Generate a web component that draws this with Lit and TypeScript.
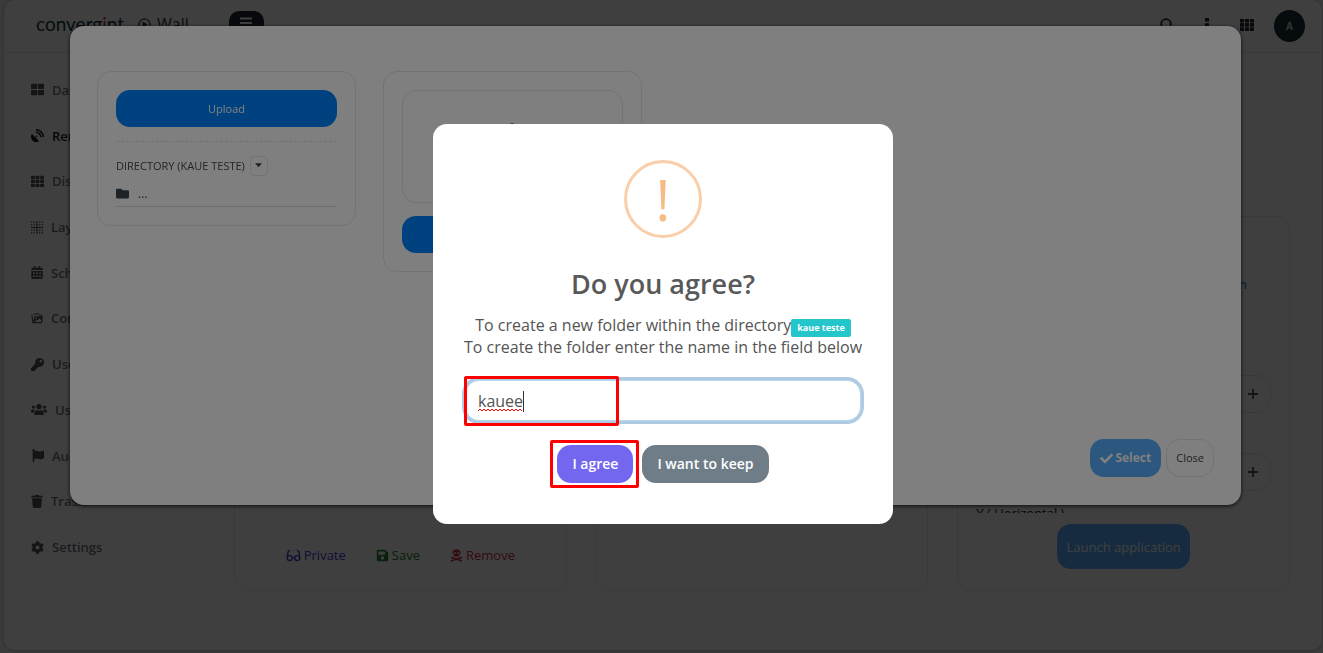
import { LitElement, html, svg, css } from "lit";
import { customElement, property, state } from "lit/decorators.js";

type Glyph = { box: string; body: unknown };

const p = (d: string) => svg`<path d=${d}></path>`;

const glyphs: Record<string, Glyph> = {
  blocks: {
    box: "0 0 512 512",
    body: svg`<rect y="32" width="242" height="208" rx="24"></rect><rect x="270" y="32" width="242" height="208" rx="24"></rect><rect y="272" width="242" height="208" rx="24"></rect><rect x="270" y="272" width="242" height="208" rx="24"></rect>`,
  },
  grid: {
    box: "0 0 512 512",
    body: svg`${[0, 181, 362].map((x) => [32, 187, 342].map((y) => svg`<rect x=${x} y=${y} width="150" height="132" rx="20"></rect>`))}`,
  },
  dish: {
    box: "0 0 512 512",
    body: p("M305.4 462.6c7.4 7.3 6.2 20.1-3 25-77.7 41.8-176.7 29.9-242.3-35.7C-5.5 386.3-17.4 287.4 24.4 209.6c4.9-9.1 17.7-10.3 25-3L166.2 323.4l27.4-27.4c-.7-2.6-1.6-5-1.6-7.8a32 32 0 1 1 32 32c-2.8 0-5.2-.9-7.8-1.6l-27.4 27.4ZM512 303.1a16.1 16.1 0 0 1-16 17H463.9a16 16 0 0 1-15.9-15C440.5 175.5 336.5 70.5 207 63.5a15.8 15.8 0 0 1-15-15.9V16A16.1 16.1 0 0 1 209 0C372.3 8.6 503.5 139.8 512 303.1Zm-96-.3a16.2 16.2 0 0 1-16.1 17.3H367.6a16.1 16.1 0 0 1-15.9-14.7c-6.9-77-68.1-138.9-144.9-145.2a15.9 15.9 0 0 1-14.8-15.9V112.1a16.1 16.1 0 0 1 17.3-16.1C319.5 104.5 407.6 192.6 416 302.8Z"),
  },
  layout: {
    box: "0 0 12 12",
    body: svg`${[0, 2.7, 5.3, 8, 10.7].map((x) => [0, 2.7, 5.3, 8, 10.7].map((y) => svg`<rect x=${x} y=${y} width="1.3" height="1.3"></rect>`))}<path d="M0 5.500h12v.9H0zM5.500 0h.9v12h-.9z"></path>`,
  },
  calendar: {
    box: "0 0 448 512",
    body: svg`<path fill-rule="evenodd" d="M0 464c0 26.500 21.500 48 48 48h352c26.500 0 48-21.500 48-48V192H0zm70-208h68v62H70zm120 0h68v62h-68zm120 0h68v62h-68zM70 376h68v62H70zm120 0h68v62h-68zm120 0h68v62h-68zM400 64h-48V16c0-9-7-16-16-16h-32c-9 0-16 7-16 16v48H160V16c0-9-7-16-16-16h-32c-9 0-16 7-16 16v48H48C21.500 64 0 85.500 0 112v48h448v-48c0-26.500-21.500-48-48-48z"></path>`,
  },
  images: {
    box: "0 0 14 14",
    body: svg`<path fill-rule="evenodd" d="M5 1h4l1 1.500h3.500V10L12.500 12.500h-11L.5 3h1.200l.8 8L4 4.500h8.300V3.600H9.500L8.500 2H5.600L5 3H3V2h1.500zM5 6.500a1 1 0 1 0 2 0 1 1 0 1 0-2 0zM4.300 11h7.600V9L9.800 6.800 7.800 9 6.800 8.200z"></path>`,
  },
  key: {
    box: "0 0 512 512",
    body: p("M512 176c0 97.2-78.8 176-176 176-11.2 0-22.2-1.1-32.8-3.1l-24 27A24 24 0 0 1 261.2 384H224v40c0 13.3-10.7 24-24 24h-40v40c0 13.3-10.7 24-24 24H24c-13.3 0-24-10.7-24-24v-78.1c0-6.4 2.5-12.5 7-17l161.8-161.8C163.1 213.8 160 195.3 160 176 160 78.8 238.8 0 336 0c97.5 0 176 78.5 176 176zM336 128c0 26.5 21.5 48 48 48s48-21.5 48-48-21.5-48-48-48-48 21.5-48 48z"),
  },
  users: {
    box: "0 0 640 512",
    body: p("M96 224c35.3 0 64-28.7 64-64s-28.7-64-64-64-64 28.7-64 64 28.7 64 64 64zm448 0c35.3 0 64-28.7 64-64s-28.7-64-64-64-64 28.7-64 64 28.7 64 64 64zm32 32h-64c-17.6 0-33.5 7.1-45.1 18.6 40.3 22.1 68.9 62 75.1 109.4h66c17.7 0 32-14.3 32-32v-32c0-35.3-28.7-64-64-64zm-256 0c61.9 0 112-50.1 112-112S381.9 32 320 32 208 82.1 208 144s50.1 112 112 112zm76.8 32h-8.3c-20.8 10-43.9 16-68.5 16s-47.6-6-68.5-16h-8.3C179.6 288 128 339.6 128 403.2V432c0 26.5 21.5 48 48 48h288c26.5 0 48-21.5 48-48v-28.8c0-63.6-51.6-115.2-115.2-115.2zm-223.7-13.4C161.5 263.1 145.6 256 128 256H64c-35.3 0-64 28.7-64 64v32c0 17.7 14.3 32 32 32h65.9c6.3-47.4 34.9-87.3 75.2-109.4z"),
  },
  flag: {
    box: "0 0 512 512",
    body: p("M350 98c-45 0-82-34-144-34-23 0-44 4-63 11a48 48 0 1 0-77 11v402c0 13 11 24 24 24h16c13 0 24-11 24-24v-94c28-12 64-22 115-22 45 0 82 34 144 34 44 0 80-15 112-37 7-5 11-12 11-20V96c0-24-24-39-45-29-34 16-76 31-117 31z"),
  },
  trash: {
    box: "0 0 448 512",
    body: p("M432 32H312l-9-19A24 24 0 0 0 281 0H167a24 24 0 0 0-22 13l-9 19H16A16 16 0 0 0 0 48v32a16 16 0 0 0 16 16h416a16 16 0 0 0 16-16V48a16 16 0 0 0-16-16zM32 128l21 339a48 48 0 0 0 48 45h246a48 48 0 0 0 48-45l21-339z"),
  },
  cog: {
    box: "0 0 512 512",
    body: p("M487.4 315.7l-42.6-24.6c4.3-23.2 4.3-47 0-70.2l42.6-24.6c4.9-2.8 7.1-8.6 5.5-14-11.1-35.6-30-67.8-54.7-94.6-3.8-4.1-10-5.1-14.8-2.3L380.8 110c-17.9-15.4-38.5-27.3-60.8-35.1V25.8c0-5.6-3.9-10.5-9.4-11.7-36.7-8.2-74.3-7.8-109.2 0-5.5 1.2-9.4 6.1-9.4 11.7V75c-22.2 7.9-42.8 19.8-60.8 35.1L88.7 85.5c-4.9-2.8-11-1.9-14.8 2.3-24.7 26.7-43.6 58.9-54.7 94.6-1.7 5.4.6 11.2 5.5 14L67.3 221c-4.3 23.2-4.3 47 0 70.2l-42.6 24.6c-4.9 2.8-7.1 8.6-5.5 14 11.1 35.6 30 67.8 54.7 94.6 3.8 4.1 10 5.1 14.8 2.3l42.6-24.6c17.9 15.4 38.5 27.3 60.8 35.1v49.2c0 5.6 3.9 10.5 9.4 11.7 36.7 8.2 74.3 7.8 109.2 0 5.5-1.2 9.4-6.1 9.4-11.7v-49.2c22.2-7.9 42.8-19.8 60.8-35.1l42.6 24.6c4.9 2.8 11 1.9 14.8-2.3 24.7-26.7 43.6-58.9 54.7-94.6 1.5-5.5-.7-11.3-5.6-14.1zM256 336c-44.1 0-80-35.9-80-80s35.9-80 80-80 80 35.9 80 80-35.9 80-80 80z"),
  },
  play: {
    box: "0 0 14 14",
    body: svg`<circle cx="7" cy="7" r="6" fill="none" stroke="currentColor" stroke-width="1.300"></circle><path d="M5 3.800v6.400L10.500 7z"></path>`,
  },
  bars: {
    box: "0 0 14 14",
    body: p("M1 1.500h12v2H1zM1 6h12v2H1zM1 10.500h12v2H1z"),
  },
  search: {
    box: "0 0 14 14",
    body: svg`<path d="M9.500 9.500 13 13" fill="none" stroke="currentColor" stroke-width="2"></path><circle cx="6" cy="6" r="4.800" fill="none" stroke="currentColor" stroke-width="1.800"></circle>`,
  },
  dots: {
    box: "0 0 14 14",
    body: p("M5 0h4v3.600H5zM5 5.200h4v3.600H5zM5 10.400h4V14H5z"),
  },
  folder: {
    box: "0 0 512 512",
    body: p("M464 128H272l-64-64H48C21.5 64 0 85.5 0 112v288c0 26.5 21.5 48 48 48h416c26.5 0 48-21.5 48-48V176c0-26.5-21.5-48-48-48z"),
  },
  check: {
    box: "0 0 512 512",
    body: p("M173.9 439.4 7.5 273c-10-10-10-26.2 0-36.2l36.2-36.2c10-10 26.2-10 36.2 0L192 312.7 432.1 72.6c10-10 26.2-10 36.2 0l36.2 36.2c10 10 10 26.2 0 36.2L210.1 439.4c-10 10-26.2 10-36.2 0z"),
  },
  glasses: {
    box: "0 0 16 14",
    body: svg`<g fill="none" stroke="currentColor" stroke-width="1.500"><circle cx="4" cy="9.800" r="2.700"></circle><circle cx="12" cy="9.800" r="2.700"></circle><path d="M6.600 9.300h2.800M1.200 9.500 2.200 2.800Q2.500 1.500 4.500 1.500M14.800 9.500l-1-6.700Q13.500 1.500 11.500 1.500"></path></g>`,
  },
  save: {
    box: "0 0 448 512",
    body: p("M433.9 129.9l-83.8-83.8A48 48 0 0 0 316.1 32H48C21.5 32 0 53.5 0 80v352c0 26.5 21.5 48 48 48h352c26.5 0 48-21.5 48-48V163.9a48 48 0 0 0-14.1-34zM224 416c-35.3 0-64-28.7-64-64s28.7-64 64-64 64 28.7 64 64-28.7 64-64 64zm96-304.5V212c0 6.6-5.4 12-12 12H76c-6.6 0-12-5.4-12-12V108c0-6.6 5.4-12 12-12h228.5c3.2 0 6.2 1.3 8.5 3.5l3.5 3.5a12 12 0 0 1 3.5 8.5z"),
  },
  skull: {
    box: "0 0 14 14",
    body: svg`<path fill-rule="evenodd" d="M7 .3c2.500 0 4.300 1.600 4.300 3.600 0 1.300-.8 2.300-1.800 2.900v1.400h-5V6.800c-1-.6-1.800-1.600-1.800-2.900C2.700 1.900 4.500.3 7 .3zM4.300 4.200a1 1 0 1 0 2 0 1 1 0 1 0-2 0zm3.400 0a1 1 0 1 0 2 0 1 1 0 1 0-2 0z"></path><path d="M1 8.800l12 4.200M13 8.800 1 13" fill="none" stroke="currentColor" stroke-width="1.700"></path>`,
  },
  caret: { box: "0 0 8 5", body: p("M0 0h8L4 4.6z") },
  plus: { box: "0 0 10 10", body: p("M4.1 0h1.8v4.1H10v1.8H5.9V10H4.1V5.9H0V4.1h4.1z") },
  upload: { box: "0 0 16 12", body: p("M4 12a4 4 0 0 1-1-7.800A5 5 0 0 1 12.500 4 4 4 0 0 1 12 12z") },
};

@customElement("ui-icon")
class UiIcon extends LitElement {
  static styles = css`
    :host { display: inline-flex; flex: none; width: 13px; height: 13px; }
    svg { width: 100%; height: 100%; fill: currentColor; }
  `;
  @property() name = "";
  render() {
    const g = glyphs[this.name];
    return html`<svg viewBox=${g.box} aria-hidden="true">${g.body}</svg>`;
  }
}

@customElement("side-menu")
class SideMenu extends LitElement {
  static styles = css`
    :host { display: block; }
    .menu { display: grid; grid-auto-rows: 1fr; min-height: 503px; padding: 14px 0 0 27px; }
    .item { display: flex; align-items: center; gap: 8px; color: #6e7180; font-size: 13px; font-weight: 600; text-decoration: none; white-space: nowrap; }
    .item.active { color: #11141c; }
    .item ui-icon { color: #50525f; }
    .item.active ui-icon { color: #11141c; }
    .item.narrow ui-icon { width: 12px; }
    .item.wide ui-icon { width: 16px; }
  `;
  private items: [string, string, string][] = [
    ["blocks", "Dashboard", ""],
    ["dish", "Remote", "active"],
    ["grid", "Displays", ""],
    ["layout", "Layouts", "narrow"],
    ["calendar", "Schedule", "narrow"],
    ["images", "Contents", "narrow"],
    ["key", "User access", ""],
    ["users", "Users", "wide"],
    ["flag", "Audit", ""],
    ["trash", "Trash", "narrow"],
    ["cog", "Settings", ""],
  ];
  render() {
    return html`<nav class="menu">
      ${this.items.map(([icon, label, kind]) => html`<a class="item ${kind}" href="#"><ui-icon name=${icon}></ui-icon>${label}</a>`)}
    </nav>`;
  }
}

@customElement("wall-page")
class WallPage extends LitElement {
  static styles = css`
    :host { display: block; min-height: 100vh; box-sizing: border-box; padding: 0 1px 3px 4px; background: #eee; }
    .shell { min-height: calc(100vh - 3px); box-sizing: border-box; border-radius: 10px; background: #fff; box-shadow: 0 0 3px #999; }
    .top { display: flex; align-items: center; height: 53px; padding: 0 17px 0 32px; border-bottom: 1px solid #e4e4e4; box-sizing: border-box; }
    .logo { padding-bottom: 4px; font-family: Lato, sans-serif; font-size: 19px; color: #14364a; line-height: 24px; }
    .logo b { font-weight: 400; color: #d8343c; }
    .title { display: flex; align-items: center; gap: 6px; margin: 0 0 0 14px; padding-bottom: 4px; font-size: 16px; font-weight: 400; color: #333; }
    .burger { display: grid; place-items: center; width: 35px; height: 30px; margin-left: 40px; padding: 0 0 6px; border: 0; border-radius: 10px; background: #1c2430; color: #fff; }
    .burger ui-icon { width: 14px; height: 14px; }
    .tools { display: flex; align-items: center; gap: 26px; margin-left: auto; color: #1f2633; }
    .tool { display: flex; padding: 0 0 2px; border: 0; background: none; color: inherit; }
    .tool ui-icon { width: 14px; height: 14px; }
    .avatar { display: grid; place-items: center; width: 31px; height: 32px; margin-left: -6px; border-radius: 50%; background: #1b2c38; color: #ccc; font-size: 10px; font-weight: 700; }
    .body { display: grid; grid-template-columns: 202px 1fr; }
    .cards { display: grid; grid-template-columns: repeat(3, 1fr); gap: 29px; padding: 163px 32px 59px 28px; }
    .card { display: flex; flex-direction: column; box-sizing: border-box; min-height: 375px; padding: 0 18px 20px; border: 1px solid #e8e8e8; border-radius: 14px; font-size: 13px; }
    .actions { display: flex; justify-content: center; gap: 30px; margin-top: auto; padding-bottom: 5px; }
    .act { display: flex; align-items: center; gap: 3px; text-decoration: none; line-height: 20px; }
    .act.private { color: #4040d0; }
    .act.private ui-icon { width: 15px; }
    .act.save { color: #27842b; }
    .act.remove { color: #d02f3c; }
    .fields { display: flex; flex-direction: column; height: 296px; overflow: hidden; }
    .fields > * { flex: none; }
    .link { align-self: flex-end; margin: 58px 24px 0 0; color: #1a5fc0; line-height: 18px; text-decoration: none; }
    .group { display: flex; box-sizing: border-box; height: 38px; border: 1px solid #e3e3e3; border-radius: 14px; overflow: hidden; }
    .group.first { margin-top: 82px; }
    .group input { flex: 1; min-width: 0; border: 0; background: none; }
    .plus { display: grid; place-items: center; width: 34px; padding: 0; border: 0; background: none; color: #555; }
    .plus ui-icon { width: 10px; height: 10px; }
    .label { color: #111; line-height: 20px; font-weight: 500; }
    .label.between { margin-top: 20px; }
    .label.last { margin-top: 12px; }
    .launch { align-self: center; height: 45px; margin-top: 11px; padding: 0 9px; border: 0; border-radius: 14px; background: #0084ff; color: #fff; font: 13px/20px "Open Sans", sans-serif; opacity: .65; }
  `;
  render() {
    return html`<div class="shell">
      <header class="top">
        <span class="logo">converg<b>i</b>nt</span>
        <h1 class="title"><ui-icon name="play"></ui-icon>Wall</h1>
        <button class="burger" aria-label="Toggle menu"><ui-icon name="bars"></ui-icon></button>
        <div class="tools">
          <button class="tool" aria-label="Search"><ui-icon name="search"></ui-icon></button>
          <button class="tool" aria-label="More"><ui-icon name="dots"></ui-icon></button>
          <button class="tool" aria-label="Apps"><ui-icon name="grid"></ui-icon></button>
          <span class="avatar">A</span>
        </div>
      </header>
      <div class="body">
        <side-menu></side-menu>
        <main class="cards">
          <section class="card">
            <div class="actions">
              <a class="act private" href="#"><ui-icon name="glasses"></ui-icon>Private</a>
              <a class="act save" href="#"><ui-icon name="save"></ui-icon>Save</a>
              <a class="act remove" href="#"><ui-icon name="skull"></ui-icon>Remove</a>
            </div>
          </section>
          <section class="card"></section>
          <section class="card">
            <div class="fields">
              <a class="link" href="#">Configuration</a>
              <div class="group first"><input aria-label="Width" /><button class="plus" aria-label="Increase width"><ui-icon name="plus"></ui-icon></button></div>
              <label class="label between" for="vertical">X ( Vertical )</label>
              <div class="group"><input id="vertical" /><button class="plus" aria-label="Increase vertical"><ui-icon name="plus"></ui-icon></button></div>
              <span class="label last">Y ( Horizontal )</span>
            </div>
            <button class="launch">Launch application</button>
          </section>
        </main>
      </div>
    </div>`;
  }
}

@customElement("directory-dialog")
class DirectoryDialog extends LitElement {
  static styles = css`
    :host { position: fixed; inset: 0; display: block; padding: 26px 82px 0 70px; background: rgba(0, 0, 0, .5); }
    .dialog { display: flex; flex-direction: column; box-sizing: border-box; min-height: 479px; padding: 45px 27px 28px; border-radius: 14px; background: #fff; box-shadow: 0 1px 4px rgba(0, 0, 0, .8); }
    .panels { display: flex; align-items: flex-start; gap: 27px; }
    .panel { box-sizing: border-box; width: 259px; padding: 18px; border: 1px solid #e6e6e6; border-radius: 14px; }
    .primary { display: block; width: 100%; height: 37px; border: 0; border-radius: 14px; background: #0084ff; color: #fff; font: 11px/18px "Open Sans", sans-serif; }
    .rule { margin: 14px 0 13px; border: 0; border-top: 1px dashed #e0e0e0; }
    .dir { display: flex; align-items: center; gap: 5px; font-size: 11px; font-weight: 500; line-height: 21px; color: #4a4a4a; }
    .drop { display: grid; place-items: center; box-sizing: border-box; width: 18px; height: 20px; padding: 0; border: 1px solid #e6e6e6; border-radius: 4px; background: none; color: #444; }
    .drop ui-icon { width: 7px; height: 5px; }
    .row { display: flex; align-items: center; gap: 9px; height: 31px; padding-top: 4px; box-sizing: border-box; border-bottom: 1px solid #dcdcdc; font-size: 12px; color: #444; }
    .row ui-icon { color: #3c4650; }
    .box { display: flex; justify-content: center; box-sizing: border-box; height: 113px; margin-bottom: 13px; padding-top: 30px; border: 1px solid #e6e6e6; border-radius: 14px; color: #444; }
    .foot { display: flex; justify-content: flex-end; gap: 5px; margin-top: auto; }
    .btn { display: flex; align-items: center; gap: 2px; height: 38px; padding: 0 10px; border: 0; border-radius: 14px; font: 12px/18px "Open Sans", sans-serif; }
    .select { background: #0084ff; color: #fff; font-weight: 700; opacity: .65; }
    .close { padding: 0 9px; border: 1px solid #e6e6e6; background: #fff; color: #444; font-size: 11px; }
  `;
  render() {
    return html`<section class="dialog" role="dialog" aria-label="Files">
      <div class="panels">
        <div class="panel">
          <button class="primary">Upload</button>
          <hr class="rule" />
          <div class="dir">DIRECTORY (KAUE TESTE)<button class="drop" aria-label="Directory options"><ui-icon name="caret"></ui-icon></button></div>
          <div class="row"><ui-icon name="folder"></ui-icon>...</div>
        </div>
        <div class="panel">
          <div class="box"><ui-icon name="upload"></ui-icon></div>
          <button class="primary" aria-label="Send"></button>
        </div>
      </div>
      <div class="foot">
        <button class="btn select"><ui-icon name="check"></ui-icon>Select</button>
        <button class="btn close">Close</button>
      </div>
    </section>`;
  }
}

@customElement("agree-dialog")
class AgreeDialog extends LitElement {
  static styles = css`
    :host { position: fixed; inset: 0; display: grid; place-items: center; padding-left: 3px; box-sizing: border-box; background: rgba(0, 0, 0, .5); }
    .dialog { display: flex; flex-direction: column; align-items: center; box-sizing: border-box; width: 460px; margin-bottom: 5px; padding: 36px 28px 41px; border-radius: 14px; background: #fff; color: #545454; }
    .mark { display: grid; place-items: center; box-sizing: border-box; width: 78px; height: 78px; border: 3px solid #facea8; border-radius: 50%; color: #f8bb86; font-size: 56px; line-height: 72px; }
    .title { margin: 28px 0 12px; font-size: 27px; line-height: 36px; font-weight: 600; color: #595959; }
    .text { margin: 0; font-size: 16px; line-height: 22px; text-align: center; white-space: nowrap; }
    .badge { display: inline-block; height: 18px; margin: -2px 0; padding: 0 6px; border-radius: 2px; background: #22c6cb; color: #fff; font-size: 9px; line-height: 18px; font-weight: 700; }
    .field { position: relative; align-self: stretch; margin: 22px 4px 24px; }
    .name { display: block; box-sizing: border-box; width: 100%; height: 41px; padding: 0 12px; border: 1px solid #b4dbed; border-radius: 14px; outline: 0; box-shadow: 0 0 0 3px #b1cae4; background: #fff; color: #545454; font: 16px/24px "Open Sans", sans-serif; }
    .typing { position: absolute; left: 12px; top: 10px; width: 47px; height: 24px; pointer-events: none; }
    .frame { position: absolute; box-sizing: border-box; border: 3px solid #f00; border-radius: 2px; pointer-events: none; }
    .frame.input { left: -1px; top: -4px; width: 155px; height: 50px; }
    .frame.button { inset: -5px -6px -5px -7px; }
    .buttons { display: flex; gap: 9px; }
    .confirm { position: relative; }
    .btn { display: block; height: 38px; padding: 0 15px; border: 0; border-radius: 14px; color: #fff; font: 600 14px/20px "Open Sans", sans-serif; background: #6e7d88; }
    .btn.agree { background: #7367f0; }
  `;
  @state() private folder = "kauee";
  render() {
    return html`<section class="dialog" role="alertdialog" aria-labelledby="question">
      <div class="mark" aria-hidden="true">!</div>
      <h2 class="title" id="question">Do you agree?</h2>
      <p class="text">To create a new folder within the directory<span class="badge">kaue teste</span><br /><label for="folder">To create the folder enter the name in the field below</label></p>
      <div class="field">
        <input class="name" id="folder" .value=${this.folder} />
        <svg class="typing" viewBox="0 0 47 24" aria-hidden="true">
          <path d="M1 21l2-2 2 2 2-2 2 2 2-2 2 2 2-2 2 2 2-2 2 2 2-2 2 2 2-2 2 2 2-2 2 2 2-2 2 2 2-2 2 2 2-2 2 2" fill="none" stroke="#f00"></path>
          <path d="M46.500 1v21" stroke="#333"></path>
        </svg>
        <span class="frame input"></span>
      </div>
      <div class="buttons">
        <div class="confirm"><button class="btn agree">I agree</button><span class="frame button"></span></div>
        <button class="btn">I want to keep</button>
      </div>
    </section>`;
  }
}

@customElement("app-root")
class AppRoot extends LitElement {
  static styles = css`
    :host { display: block; min-height: 100vh; font-family: "Open Sans", sans-serif; }
  `;
  render() {
    return html`<wall-page></wall-page><directory-dialog></directory-dialog><agree-dialog></agree-dialog>`;
  }
}
